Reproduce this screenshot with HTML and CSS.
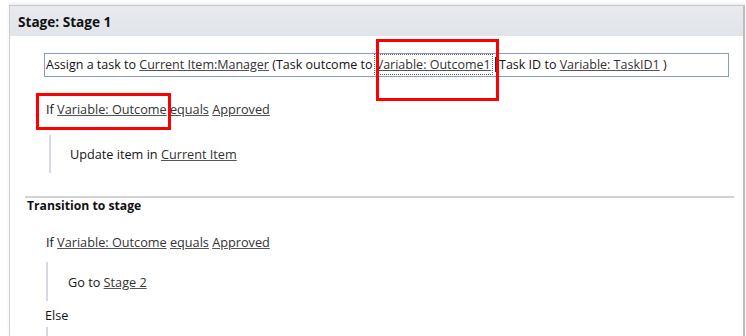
FILE: index.html
```html
<!DOCTYPE html>
<html lang="en">
<head>
    <meta charset="UTF-8">
    <title>Stage: Stage 1</title>
    <link rel="stylesheet" href="styles.css">
</head>
<body>
    <div class="stage">
        <div class="stage-head">Stage: Stage 1</div>

        <div class="stage-body">
            <div class="action-box">Assign a task to <a class="ref">Current Item:Manager</a> (Task outcome to <a class="ref focused">Variable: Outcome1</a><span class="caret"></span> Task ID to <a class="ref">Variable: TaskID1</a> )</div>

            <div class="cond cond-first">If <a class="ref">Variable: Outcome</a> <a class="ref">equals</a> <a class="ref">Approved</a></div>

            <div class="branch branch-first">
                <div class="step">Update item in <a class="ref">Current Item</a></div>
            </div>
        </div>

        <div class="transition">
            <div class="transition-head">Transition to stage</div>

            <div class="cond cond-trans">If <a class="ref">Variable: Outcome</a> <a class="ref">equals</a> <a class="ref">Approved</a></div>

            <div class="branch branch-goto">
                <div class="step">Go to <a class="ref">Stage 2</a></div>
            </div>

            <div class="cond cond-else">Else</div>

            <div class="branch branch-else"></div>
        </div>
    </div>

    <!-- cadres rouges d'annotation -->
    <div class="mark mark-outcome1"></div>
    <div class="mark mark-outcome"></div>
</body>
</html>
```

FILE: styles.css
```css
body {
    margin: 0;
    height: 336px;
    overflow: hidden;
    background: #fff;
    font-family: "Open Sans", "Noto Sans", sans-serif;
    font-size: 12.7px;
    color: #141414;
}

.stage {
    margin: 5px 0 0 9px;
    width: 733px;
    height: 331px;
    border-top: 1px solid #c8c8c8;
    border-left: 1px solid #cfcfcf;
    border-right: 2px solid #bdbdbd;
    box-shadow: 0 -2px 3px rgba(0, 0, 0, 0.07);
}

.stage-head {
    height: 30px;
    padding: 2px 0 0 8px;
    box-sizing: border-box;
    background: linear-gradient(#e8eaee, #e1e4e9);
    font-weight: bold;
    font-size: 13.6px;
    line-height: 28px;
    color: #111;
}

.ref {
    color: #333;
    text-decoration: underline;
    text-decoration-color: #555;
}

.action-box {
    height: 24px;
    margin: 17px 14px 0 34px;
    padding-left: 1px;
    box-sizing: border-box;
    border: 1px solid #8a9cc0;
    font-size: 12.5px;
    line-height: 22px;
    white-space: nowrap;
}

.focused {
    outline: 1px dotted #666;
    outline-offset: 1px;
}

.caret {
    display: inline-block;
    width: 1px;
    height: 15px;
    margin-left: 4px;
    vertical-align: -3px;
    background: #1b2a6e;
}

.cond {
    height: 20px;
    line-height: 20px;
    white-space: nowrap;
}

.cond-first {
    margin: 22px 0 0 36px;
}

.branch {
    display: flex;
    align-items: center;
    border-left: 2px solid #d6d9e3;
}

.branch-first {
    height: 38px;
    margin: 16px 0 0 39px;
    padding-left: 19px;
}

.transition {
    margin: 23px 9px 0 15px;
    border-top: 2px solid #d2d2d2;
}

.transition-head {
    height: 16px;
    line-height: 16px;
    padding-left: 2px;
    font-weight: bold;
    font-size: 12.2px;
    color: #111;
}

.cond-trans {
    margin: 18px 0 0 21px;
}

.branch-goto {
    height: 39px;
    margin: 10px 0 0 21px;
    padding-left: 20px;
}

.cond-else {
    margin: 4px 0 0 20px;
}

.branch-else {
    height: 20px;
    margin: 2px 0 0 21px;
}

.mark {
    position: absolute;
    border: 3px solid #f00;
    box-sizing: border-box;
}

.mark-outcome1 {
    left: 376px;
    top: 39px;
    width: 123px;
    height: 62px;
}

.mark-outcome {
    left: 36px;
    top: 93px;
    width: 135px;
    height: 37px;
}
```
